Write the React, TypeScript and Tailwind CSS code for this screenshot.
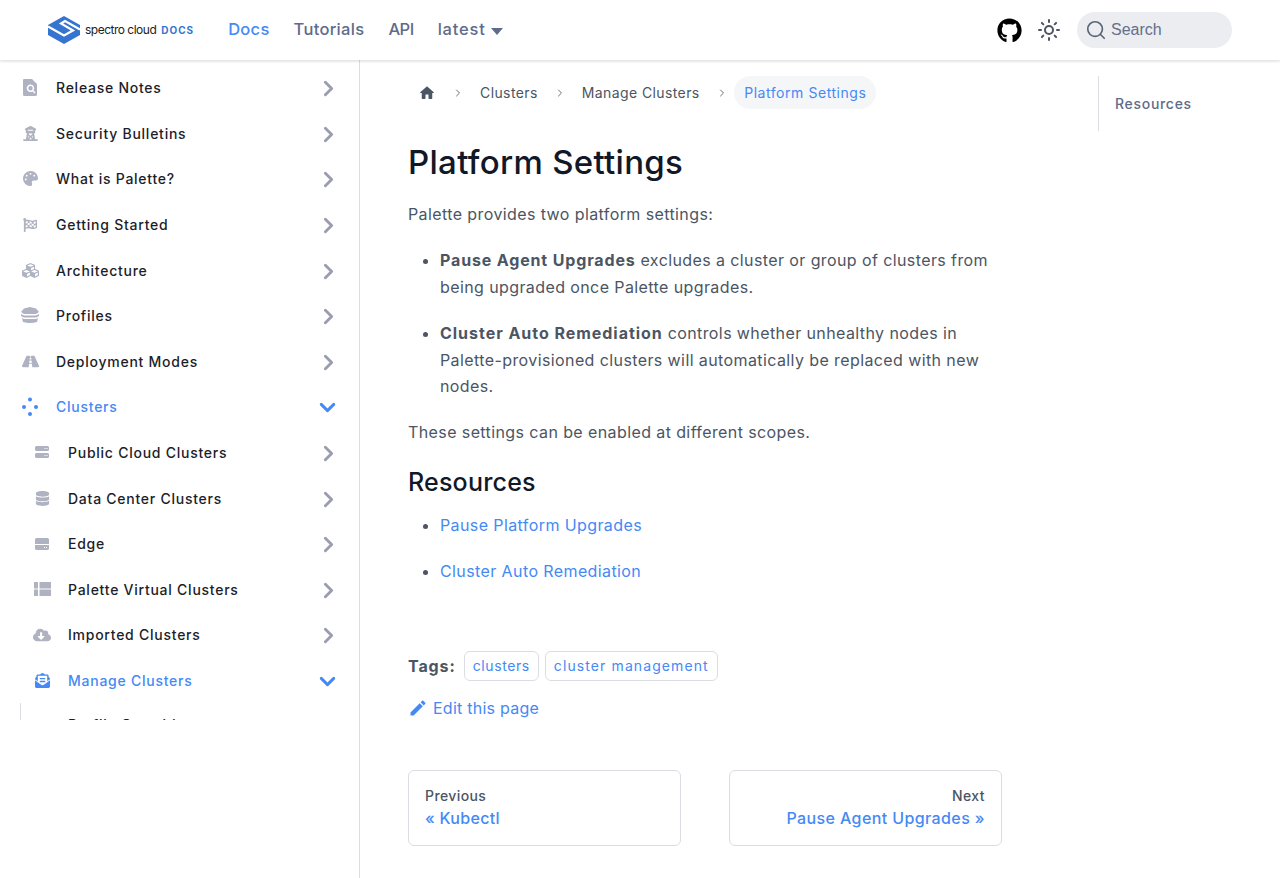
import type { ReactNode } from 'react';
import { ChevronDown, ChevronRight, Search, Sun } from 'lucide-react';
import {
  FaCloudDownloadAlt,
  FaCubes,
  FaDatabase,
  FaEnvelopeOpenText,
  FaFlagCheckered,
  FaGithub,
  FaPalette,
  FaRoad,
} from 'react-icons/fa';
import { FaTowerObservation } from 'react-icons/fa6';
import { MdEdit } from 'react-icons/md';

const FONT = 'font-["Inter","Noto_Sans",sans-serif]';

// ── Drawn icons ───────────────────────────────────────────────────────────────

const LogoMark = () => (
  <svg width="32" height="28" viewBox="0 0 32 28">
    <path d="M16 0 L32 9 V19 L16 28 L0 19 V9 Z" fill="#3575cf" />
    <path
      d="M0 10.500 L16 19.500 L25 14.500 L13 7.500 L17 5 L32 13.500"
      fill="none"
      stroke="#fff"
      strokeWidth="2.200"
    />
  </svg>
);

const FileSearchIcon = () => (
  <svg width="16" height="17" viewBox="0 0 16 17" fill="currentColor">
    <path
      fillRule="evenodd"
      d="M2 0h8l5 5v10.500a1.500 1.500 0 0 1-1.500 1.500h-11A1.500 1.500 0 0 1 1 15.500V1a1 1 0 0 1 1-1Zm6.500 5.500a3.800 3.800 0 1 0 2 7l2 2 1-1-2-2a3.800 3.800 0 0 0-3-6Zm0 1.600a2.200 2.200 0 1 1 0 4.400 2.200 2.200 0 0 1 0-4.400Z"
    />
  </svg>
);

const ClusterDots = () => (
  <svg width="16" height="20" viewBox="0 0 16 20" fill="currentColor">
    <circle cx="8" cy="2.500" r="2" />
    <circle cx="2" cy="10" r="2" />
    <circle cx="14" cy="10" r="2" />
    <circle cx="8" cy="17" r="2" />
  </svg>
);

const ProfileStack = () => (
  <svg width="18" height="17" viewBox="0 0 18 17" fill="currentColor">
    <path d="M9 0 L15 1.500 L18 5 L15 7 H3 L0 5 L3 1.500 Z" />
    <path d="M0 7 L3 8.500 H15 L18 7 V9 L15 10.500 H3 L0 9 Z" />
    <path d="M1 11 L3 12 H15 L17 11 L16 15 Q9 17 2 15 Z" />
  </svg>
);

const ServerSlabs = () => (
  <svg width="14" height="13" viewBox="0 0 14 13" fill="currentColor">
    <path
      fillRule="evenodd"
      d="M1.500 0h11A1.500 1.500 0 0 1 14 1.500v2A1.500 1.500 0 0 1 12.500 5h-11A1.500 1.500 0 0 1 0 3.500v-2A1.500 1.500 0 0 1 1.500 0ZM9.500 2v1h1V2Zm2 0v1h1V2ZM1.500 7h11A1.500 1.500 0 0 1 14 8.500v2a1.500 1.500 0 0 1-1.500 1.500h-11A1.500 1.500 0 0 1 0 10.500v-2A1.500 1.500 0 0 1 1.500 7ZM9.500 9v1h1V9Zm2 0v1h1V9Z"
    />
  </svg>
);

const EdgeSlab = () => (
  <svg width="14" height="12" viewBox="0 0 14 12" fill="currentColor">
    <path
      fillRule="evenodd"
      d="M1.500 0h11A1.500 1.500 0 0 1 14 1.500V6H0V1.500A1.500 1.500 0 0 1 1.500 0ZM0 7h14v3.500a1.500 1.500 0 0 1-1.500 1.500h-11A1.500 1.500 0 0 1 0 10.500Zm9 2v1h1V9Zm2 0v1h1V9Z"
    />
  </svg>
);

const VirtualGrid = () => (
  <svg width="17" height="14" viewBox="0 0 17 14" fill="currentColor">
    <rect x="0" y="0" width="4" height="6.500" />
    <rect x="0" y="7.500" width="4" height="6.500" />
    <rect x="5.500" y="0" width="11.500" height="6.500" />
    <rect x="5.500" y="7.500" width="11.500" height="6.500" />
  </svg>
);

const HomeIcon = () => (
  <svg width="18" height="18" viewBox="0 0 24 24" fill="#4b5563">
    <path d="M10 19v-5h4v5c0 .55.45 1 1 1h3c.55 0 1-.45 1-1v-7h1.700c.46 0 .68-.57.33-.87L12.670 3.600c-.38-.34-.96-.34-1.340 0l-8.360 7.530c-.34.3-.13.87.33.87H5v7c0 .55.45 1 1 1h3c.55 0 1-.45 1-1z" />
  </svg>
);

// ── Sidebar row ───────────────────────────────────────────────────────────────

type Row = { label: string; icon: ReactNode; open?: boolean; nested?: boolean };

const ROWS: Row[] = [
  { label: 'Release Notes', icon: <FileSearchIcon /> },
  { label: 'Security Bulletins', icon: <FaTowerObservation size={15} /> },
  { label: 'What is Palette?', icon: <FaPalette size={15} /> },
  { label: 'Getting Started', icon: <FaFlagCheckered size={14} /> },
  { label: 'Architecture', icon: <FaCubes size={17} /> },
  { label: 'Profiles', icon: <ProfileStack /> },
  { label: 'Deployment Modes', icon: <FaRoad size={17} /> },
  { label: 'Clusters', icon: <ClusterDots />, open: true },
  { label: 'Public Cloud Clusters', icon: <ServerSlabs />, nested: true },
  { label: 'Data Center Clusters', icon: <FaDatabase size={15} />, nested: true },
  { label: 'Edge', icon: <EdgeSlab />, nested: true },
  { label: 'Palette Virtual Clusters', icon: <VirtualGrid />, nested: true },
  { label: 'Imported Clusters', icon: <FaCloudDownloadAlt size={18} />, nested: true },
  { label: 'Manage Clusters', icon: <FaEnvelopeOpenText size={15} />, open: true, nested: true },
];

const SidebarRow = ({ row }: { row: Row }) => (
  <li
    className={`flex h-[45.6px] items-center ${row.nested ? 'pl-[32px]' : 'pl-[20px]'} ${row.open ? 'text-[#4589f5]' : 'text-[#1c1e29]'}`}
  >
    <span className={`flex w-[20px] justify-center ${row.open ? 'text-[#4589f5]' : 'text-[#aeb2c1]'}`}>{row.icon}</span>
    <span className="ml-[16px] flex-1 text-[14px] font-medium tracking-[0.75px]">{row.label}</span>
    {row.open ? (
      <ChevronDown size={25} strokeWidth={2.8} className="mt-[1px] mr-[19px]" />
    ) : (
      <ChevronRight size={25} strokeWidth={2.8} className="mt-[2px] mr-[18px] text-[#9a9db0]" />
    )}
  </li>
);

// ── Page ──────────────────────────────────────────────────────────────────────

const Crumb = ({ children }: { children: ReactNode }) => (
  <span className="flex items-center text-[14px] tracking-[0.4px] text-[#4b5563]">{children}</span>
);

const Sep = () => <ChevronRight size={12} strokeWidth={2} className="mx-[16px] text-[#6b7280]" />;

export default function App() {
  return (
    <div className={`${FONT} flex h-screen flex-col overflow-hidden bg-white`}>
      <nav className="relative z-10 flex h-[60px] shrink-0 items-center pr-[48px] pl-[48px] shadow-[0_2px_2px_rgba(0,0,0,0.1)]">
        <LogoMark />
        <span className="ml-[5px] text-[12px] tracking-[-0.5px] text-[#222]">spectro cloud</span>
        <span className="ml-[5px] text-[10px] font-bold tracking-[1px] text-[#3575cf]">DOCS</span>
        <div className="mb-[1px] ml-[34px] flex items-center gap-[24px] text-[16.5px] font-medium tracking-[0.3px] text-[#606b8a]">
          <span className="text-[#4589f5]">Docs</span>
          <span>Tutorials</span>
          <span className="tracking-[-0.5px]">API</span>
          <span className="flex items-center tracking-[0.8px]">
            latest
            <span className="mt-[3px] ml-[5px] border-x-[6px] border-t-[7px] border-x-transparent border-t-[#606b8a]" />
          </span>
        </div>
        <div className="ml-auto flex items-center">
          <FaGithub size={25} className="text-black" />
          <Sun size={24} strokeWidth={2} className="ml-[15px] text-[#4b5563]" />
          <div className="ml-[16px] flex h-[36px] w-[155px] items-center rounded-[18px] bg-[#ebedf0] pl-[8px]">
            <Search size={22} strokeWidth={1.8} className="text-[#5b6478]" />
            <span className='ml-[4px] font-["Liberation_Sans",sans-serif] text-[16px] text-[#656f8c]'>Search</span>
          </div>
        </div>
      </nav>

      <div className="flex flex-1">
        <aside className="w-[360px] shrink-0 border-r border-[#dadde1]">
          <div className="h-[660px] overflow-hidden pt-[5px]">
            <ul>
              {ROWS.map((row) => (
                <SidebarRow key={row.label} row={row} />
              ))}
            </ul>
            <ul className="ml-[20px] border-l border-[#dadde1] pt-[11px] pl-[47px]">
              <li className="text-[14px] font-medium tracking-[0.75px] text-[#1c1e29]">Profile Overrides</li>
            </ul>
          </div>
        </aside>

        <main className="flex-1 pt-[16px] pl-[48px]">
          <div className="flex">
            <div className="w-[594px]">
              <div className="flex h-[33px] items-center">
                <span className="ml-[10px]">
                  <HomeIcon />
                </span>
                <Sep />
                <Crumb>Clusters</Crumb>
                <Sep />
                <Crumb>Manage Clusters</Crumb>
                <Sep />
                <span className="ml-[-9.5px] flex h-[33px] items-center rounded-[17px] bg-[#f5f6f8] px-[10px] text-[14px] tracking-[0.55px] text-[#4589f5]">
                  Platform Settings
                </span>
              </div>

              <h1 className="mt-[32px] text-[33px] leading-[42px] font-medium tracking-[0.3px] text-[#111827]">
                Platform Settings
              </h1>

              <div className="text-[16px] leading-[26.4px] tracking-[0.4px] text-[#4b5563]">
                <p className="mt-[18px]">Palette provides two platform settings:</p>
                <ul className="mt-[20px] list-disc pl-[32px]">
                  <li>
                    <b className="font-bold tracking-[0.85px]">Pause Agent Upgrades</b> excludes a cluster or group of
                    clusters from being upgraded once Palette upgrades.
                  </li>
                  <li className="mt-[20px]">
                    <b className="font-bold tracking-[0.97px]">Cluster Auto Remediation</b> controls whether unhealthy
                    nodes in Palette-provisioned clusters will automatically be replaced with new nodes.
                  </li>
                </ul>
                <p className="mt-[20px]">These settings can be enabled at different scopes.</p>
                <h2 className="mt-[19px] text-[25px] leading-[34px] font-medium tracking-[0.2px] text-[#111827]">
                  Resources
                </h2>
                <ul className="mt-[13px] list-disc pl-[32px] text-[#4589f5] marker:text-[#4b5563]">
                  <li>Pause Platform Upgrades</li>
                  <li className="mt-[20px]">Cluster Auto Remediation</li>
                </ul>
              </div>

              <div className="mt-[66px] flex items-center">
                <b className="mr-[8px] text-[16px] font-bold tracking-[0.9px] text-[#4b5563]">Tags:</b>
                <span className="mr-[6px] flex h-[30px] items-center rounded-[6px] border border-[#dadde1] px-[8px] text-[14px] tracking-[0.6px] text-[#4589f5]">
                  clusters
                </span>
                <span className="flex h-[30px] items-center rounded-[6px] border border-[#dadde1] px-[8px] text-[14px] tracking-[1.1px] text-[#4589f5]">
                  cluster management
                </span>
              </div>

              <div className="mt-[14px] flex h-[26px] items-center text-[16px] tracking-[0.25px] text-[#4589f5]">
                <MdEdit size={20} />
                <span className="ml-[5px]">Edit this page</span>
              </div>

              <div className="mt-[49px] grid grid-cols-2 gap-[48px]">
                <div className="h-[76px] rounded-[6px] border border-[#dadde1] px-[16px] pt-[14px]">
                  <div className="text-[14px] leading-[21px] font-medium tracking-[0.4px] text-[#4b5563]">Previous</div>
                  <div className="text-[16px] leading-[24px] font-medium tracking-[0.3px] text-[#4589f5]">« Kubectl</div>
                </div>
                <div className="h-[76px] rounded-[6px] border border-[#dadde1] px-[16px] pt-[14px] text-right">
                  <div className="text-[14px] leading-[21px] font-medium tracking-[0.4px] text-[#4b5563]">Next</div>
                  <div className="text-[16px] leading-[24px] font-medium tracking-[0.4px] text-[#4589f5]">
                    Pause Agent Upgrades »
                  </div>
                </div>
              </div>
            </div>

            <div className="ml-[96px] flex h-[55px] items-center border-l border-[#dadde1] pl-[16px]">
              <span className="text-[14px] font-medium tracking-[0.7px] text-[#606b8a]">Resources</span>
            </div>
          </div>
        </main>
      </div>
    </div>
  );
}
